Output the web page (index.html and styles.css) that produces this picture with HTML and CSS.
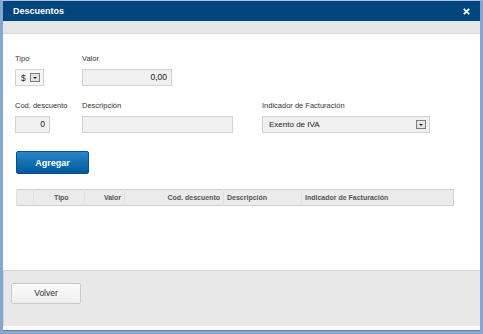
FILE: index.html
```html
<!DOCTYPE html>
<html lang="es">
<head>
    <meta charset="UTF-8">
    <meta name="viewport" content="width=device-width, initial-scale=1.0">
    <link rel="stylesheet" href="styles.css">
    <title>Descuentos</title>
</head>
<body>

<div class="window">
    <div class="titlebar">
        <span class="title">Descuentos</span>
        <svg class="close" width="7" height="7" viewBox="0 0 7 7">
            <path d="M0.8 0.8 L6.2 6.2 M6.2 0.8 L0.8 6.2" stroke="#fff" stroke-width="1.7"/>
        </svg>
    </div>
    <div class="toolbar"></div>

    <div class="content">
        <div class="row">
            <div class="field f-tipo">
                <label>Tipo</label>
                <div class="select small">
                    <span>$</span>
                    <span class="arrow"></span>
                </div>
            </div>
            <div class="field">
                <label>Valor</label>
                <div class="input w-valor">0,00</div>
            </div>
        </div>

        <div class="row row2">
            <div class="field f-tipo">
                <label>Cod. descuento</label>
                <div class="input w-cod">0</div>
            </div>
            <div class="field f-desc">
                <label>Descripción</label>
                <div class="input w-desc"></div>
            </div>
            <div class="field">
                <label>Indicador de Facturación</label>
                <div class="select wide">
                    <span>Exento de IVA</span>
                    <span class="arrow"></span>
                </div>
            </div>
        </div>

        <button class="btn-primary">Agregar</button>

        <table class="grid">
            <colgroup>
                <col class="c-sel">
                <col class="c-tipo">
                <col class="c-valor">
                <col class="c-cod">
                <col class="c-desc">
                <col>
            </colgroup>
            <thead>
                <tr>
                    <th></th>
                    <th class="t-tipo">Tipo</th>
                    <th class="t-right">Valor</th>
                    <th class="t-right">Cod. descuento</th>
                    <th>Descripción</th>
                    <th>Indicador de Facturación</th>
                </tr>
            </thead>
        </table>
    </div>

    <div class="footer">
        <button class="btn">Volver</button>
    </div>
    <div class="strip"></div>
</div>

</body>
</html>
```

FILE: styles.css
```css
body {
    margin: 0;
    font-family: 'Liberation Sans', Arial, sans-serif;
    color: #333;
}

.window {
    position: relative;
    width: 483px;
    height: 334px;
    box-sizing: border-box;
    border: 3px solid #86a5d3;
    border-top: 1px solid #a9c0e2;
    background: #fff;
    display: flex;
    flex-direction: column;
}

.titlebar {
    height: 20px;
    flex: none;
    background: #00457b;
    color: #fff;
    display: flex;
    align-items: center;
    justify-content: space-between;
    padding: 0 10px 0 10px;
}

.title {
    font-weight: bold;
    font-size: 9px;
}

.close {
    display: block;
}

.toolbar {
    height: 12px;
    flex: none;
    background: #e6e6e6;
    border-bottom: 1px solid #dadada;
}

.content {
    height: 236px;
    flex: none;
    box-sizing: border-box;
    padding: 20px 12px 0 12px;
}

.row {
    display: flex;
}

.row2 {
    margin-top: 15px;
}

.field {
    display: flex;
    flex-direction: column;
}

.f-tipo {
    width: 67px;
}

.f-desc {
    width: 180px;
}

label {
    font-size: 7.5px;
    line-height: 10px;
    height: 10px;
    margin-bottom: 5px;
    color: #333;
}

.input {
    height: 17px;
    box-sizing: border-box;
    background: #f0f0f0;
    border: 1px solid #d2d2d2;
    font-size: 8.5px;
    line-height: 15px;
    text-align: right;
    padding-right: 4px;
    color: #222;
}

.w-valor {
    width: 90px;
}

.w-cod {
    width: 35px;
}

.w-desc {
    width: 151px;
}

.select {
    height: 17px;
    box-sizing: border-box;
    background: #f0f0f0;
    border: 1px solid #d2d2d2;
    display: flex;
    align-items: center;
    justify-content: space-between;
    font-size: 8px;
    color: #222;
}

.select.small {
    width: 29px;
    background: #f7f7f7;
    padding: 0 3px 0 5px;
    font-size: 8.5px;
}

.select.wide {
    width: 168px;
    padding: 0 3px 0 6px;
}

.arrow {
    position: relative;
    width: 10px;
    height: 9px;
    box-sizing: border-box;
    border: 1px solid #7d7d7d;
    background: #e4e4e4;
}

.arrow::after {
    content: "";
    position: absolute;
    left: 2px;
    top: 3px;
    border-left: 2px solid transparent;
    border-right: 2px solid transparent;
    border-top: 2px solid #222;
}

.btn-primary {
    display: block;
    margin: 18px 0 0 1px;
    width: 73px;
    height: 23px;
    border: 1px solid #0a4f86;
    border-radius: 2px;
    background: linear-gradient(#2985c8, #005a9c);
    color: #fff;
    font-family: inherit;
    font-weight: bold;
    font-size: 9px;
    padding: 0;
}

.grid {
    margin: 15px 0 0 1px;
    width: 438px;
    border-collapse: collapse;
    table-layout: fixed;
    background: #ebebeb;
    border: 1px solid #cfcfcf;
}

.c-sel { width: 17px; }
.c-tipo { width: 51px; }
.c-valor { width: 40px; }
.c-cod { width: 99px; }
.c-desc { width: 78px; }

.grid th {
    height: 15px;
    padding: 0 3px;
    font-size: 7px;
    font-weight: bold;
    color: #555;
    border-left: 1px solid #e0e0e0;
    white-space: nowrap;
    overflow: hidden;
    text-align: left;
}

.grid th.t-tipo {
    padding-left: 20px;
}

.grid th.t-right {
    text-align: right;
}

.footer {
    flex: none;
    height: 56px;
    box-sizing: border-box;
    background: #e8e8e8;
    border-top: 1px solid #d4d4d4;
    border-left: 1px solid #d0d0d0;
    padding: 11px 0 0 7px;
}

.btn {
    width: 70px;
    height: 21px;
    border: 1px solid #cacaca;
    border-radius: 2px;
    background: linear-gradient(#fbfbfb, #eeeeee);
    font-family: inherit;
    font-size: 8.5px;
    color: #333;
    padding: 0;
}

.strip {
    flex: none;
    height: 5px;
    background: #fafafa;
    border-bottom: 1px solid #6a7f9a;
    box-sizing: border-box;
}
```
